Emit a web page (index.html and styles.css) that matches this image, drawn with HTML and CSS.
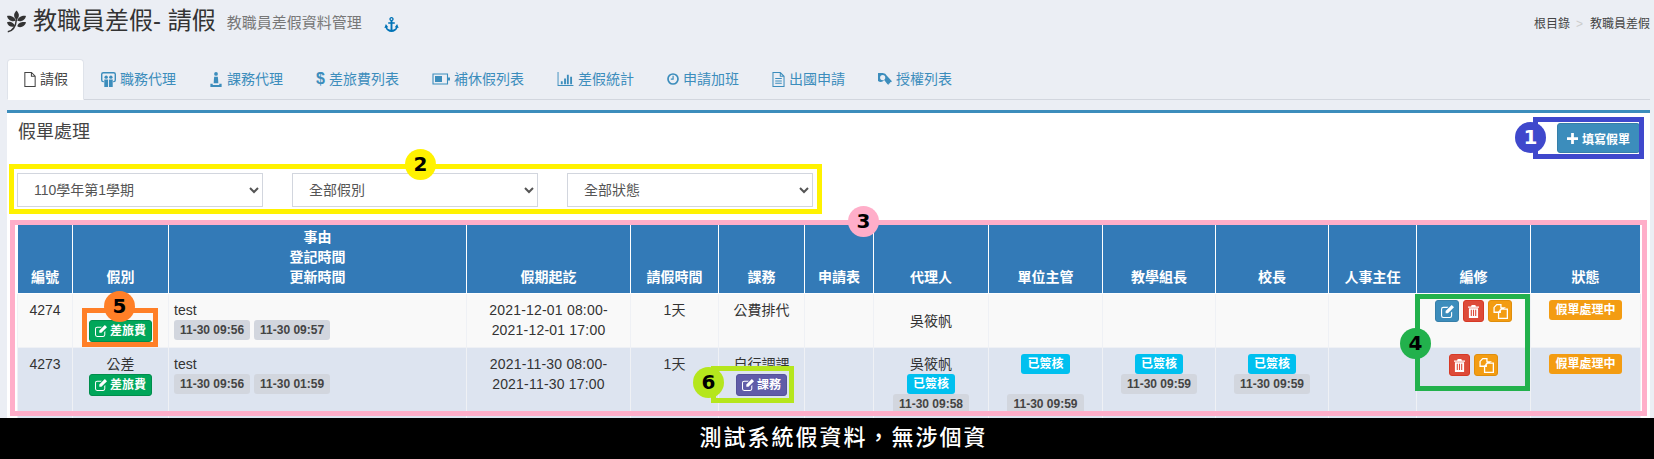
FILE: index.html
```html
<!DOCTYPE html>
<html lang="zh-Hant">
<head>
    <meta charset="UTF-8">
    <title>教職員差假- 請假</title>
    <link rel="stylesheet" href="styles.css">
</head>
<body>
    <svg class="icon-defs" aria-hidden="true">
        <symbol id="i-leaf" viewBox="0 0 24 28">
            <path d="M12 0C16 4 16 8 12 12C8 8 8 4 12 0Z"/>
            <path d="M13 13C14 8 20 6 24 7C23 12 18 15 13 13Z"/>
            <path d="M11 13C10 8 4 6 0 7C1 12 6 15 11 13Z"/>
            <path d="M10 20C9 15 3 13 0 15C1 20 6 22 10 20Z"/>
            <path d="M13 20C14 15 20 14 24 15C23 20 17 23 13 20Z"/>
            <path d="M1 27C7 26 11 21 12 11" fill="none" stroke="currentColor" stroke-width="1.800"/>
        </symbol>
        <symbol id="i-anchor" viewBox="0 0 16 16">
            <path d="M8 0a2.2 2.2 0 0 1 1 4.2V5.5h2.5v1.6H9v6.6c1.7-.3 3.2-1.2 3.8-2.6l-1.3-.3L14 7.5l1.6 4.2-1.2-.3C13.500 14 11 16 8 16s-5.500-2-6.400-4.600l-1.200.3L2 7.500l2.500 3.300-1.300.3c.6 1.400 2.100 2.300 3.800 2.600V7.100H4.500V5.500H7V4.200A2.200 2.200 0 0 1 8 0zm0 1.300a.9.9 0 1 0 0 1.800.9.9 0 0 0 0-1.800z"/>
        </symbol>
        <symbol id="i-file" viewBox="0 0 14 16">
            <path d="M1.500.5h7l4 4v11h-11zM8.500.5v4h4" fill="none" stroke="currentColor" stroke-width="1.100"/>
        </symbol>
        <symbol id="i-team" viewBox="0 0 16 16">
            <path d="M2.500 0h11A2.500 2.500 0 0 1 16 2.500v6A2.500 2.500 0 0 1 13.500 11H13V9.500h.5a1 1 0 0 0 1-1v-6a1 1 0 0 0-1-1h-11a1 1 0 0 0-1 1v6a1 1 0 0 0 1 1H3V11h-.5A2.500 2.500 0 0 1 0 8.500v-6A2.500 2.500 0 0 1 2.500 0z"/>
            <circle cx="5.500" cy="5.500" r="1.800"/>
            <circle cx="10.500" cy="5.500" r="1.800"/>
            <path d="M3.500 8h4v8h-4zM8.500 8h4v8h-4z"/>
        </symbol>
        <symbol id="i-person" viewBox="0 0 14 16">
            <circle cx="7" cy="2" r="2"/>
            <path d="M5 5h4l.5 7h-5z"/>
            <path d="M1 12.500h2.500v1.300h7v-1.300H13V16H1z"/>
        </symbol>
        <symbol id="i-battery" viewBox="0 0 18 12">
            <path d="M1 1h14.500v10H1z" fill="none" stroke="currentColor" stroke-width="1.100"/>
            <path d="M3 3h7v6H3zM16 4.500h2v3h-2z"/>
        </symbol>
        <symbol id="i-chart" viewBox="0 0 17 15">
            <path d="M0 0h1v14h16v1H0z"/>
            <path d="M3.500 10h2v3h-2zM7 7h2v6H7zM10 3h2v10h-2zM13.500 5h2v8h-2z"/>
        </symbol>
        <symbol id="i-clock" viewBox="0 0 12 12">
            <circle cx="6" cy="6" r="5" fill="none" stroke="currentColor" stroke-width="1.700"/>
            <path d="M5.500 2.800h1.200v3.900H3.800V5.600h1.700z"/>
        </symbol>
        <symbol id="i-doc" viewBox="0 0 13 16">
            <path d="M.6.600h7.800l4 4v10.800H.6zM8.400.600v4h4" fill="none" stroke="currentColor" stroke-width="1.100"/>
            <path d="M3 6.500h7v1H3zM3 9h7v1H3zM3 11.500h7v1H3z"/>
        </symbol>
        <symbol id="i-key" viewBox="0 0 15 13">
            <path fill-rule="evenodd" d="M5 0a5 5 0 0 1 4.500 3L15 9l-1 1-1-.2.100 1.400-1.400.1-.2 1.400-1.300-.5-3.600-4.500A5 5 0 1 1 5 0zM5 2.200a2.800 2.800 0 1 0 0 5.600 2.800 2.800 0 0 0 0-5.600z"/>
        </symbol>
        <symbol id="i-plus" viewBox="0 0 12 12">
            <path d="M4.500 0h3v4.500H12v3H7.500V12h-3V7.500H0v-3h4.500z"/>
        </symbol>
        <symbol id="i-edit" viewBox="0 0 14 14">
            <path d="M2.500 2H8L6.800 3.200H2.500a1.300 1.300 0 0 0-1.300 1.300v7c0 .7.600 1.300 1.300 1.300h7c.7 0 1.300-.6 1.300-1.300V8.200L12 7v4.500A2.500 2.500 0 0 1 9.500 14h-7A2.500 2.500 0 0 1 0 11.500v-7A2.500 2.500 0 0 1 2.500 2z"/>
            <path d="M11.500 0L14 2.500 7.500 9H5V6.500z"/>
        </symbol>
        <symbol id="i-trash" viewBox="0 0 12 14">
            <path d="M4 0h4l.6 1.500H12v1.300H0V1.500h3.400z"/>
            <path d="M1 3.500h10V14H1zM3 5v7h1.200V5zm2.400 0v7h1.200V5zM7.800 5v7H9V5z" fill-rule="evenodd"/>
        </symbol>
        <symbol id="i-copy" viewBox="0 0 14 14">
            <path d="M3.500.6h3.900v3H10L6.800 5.500v2.200H1V3.200zM8 4.800h5.400v8.600H5.200V7.500z" fill="none" stroke="currentColor" stroke-width="1.200"/>
        </symbol>
    </svg>

    <div class="page">
        <header class="page-header">
            <h1 class="page-title">
                <svg class="logo"><use href="#i-leaf"/></svg>
                教職員差假- 請假
                <small>教職員差假資料管理</small>
                <svg class="anchor"><use href="#i-anchor"/></svg>
            </h1>
            <div class="breadcrumb"><span>根目錄</span><span class="sep">&gt;</span><span>教職員差假</span></div>
        </header>

        <ul class="tabs">
            <li class="active"><a href="#"><svg width="14" height="15"><use href="#i-file"/></svg>請假</a></li>
            <li><a href="#"><svg width="15" height="15"><use href="#i-team"/></svg>職務代理</a></li>
            <li><a href="#"><svg width="14" height="15"><use href="#i-person"/></svg>課務代理</a></li>
            <li><a href="#"><b class="dollar">$</b>差旅費列表</a></li>
            <li><a href="#"><svg width="18" height="12"><use href="#i-battery"/></svg>補休假列表</a></li>
            <li><a href="#"><svg width="17" height="14"><use href="#i-chart"/></svg>差假統計</a></li>
            <li><a href="#"><svg width="12" height="12"><use href="#i-clock"/></svg>申請加班</a></li>
            <li><a href="#"><svg width="13" height="15"><use href="#i-doc"/></svg>出國申請</a></li>
            <li><a href="#"><svg width="14" height="12"><use href="#i-key"/></svg>授權列表</a></li>
        </ul>

        <section class="box">
            <div class="box-header">
                <h3 class="box-title">假單處理</h3>
                <button class="btn btn-add" type="button"><svg width="11" height="11"><use href="#i-plus"/></svg>填寫假單</button>
            </div>

            <div class="filters">
                <select><option>110學年第1學期</option></select>
                <select><option>全部假別</option></select>
                <select><option>全部狀態</option></select>
            </div>

            <table class="leave-table">
                <thead>
                    <tr>
                        <th class="c-id">編號</th>
                        <th class="c-type">假別</th>
                        <th class="c-reason">事由<br>登記時間<br>更新時間</th>
                        <th class="c-range">假期起訖</th>
                        <th class="c-time">請假時間</th>
                        <th class="c-course">課務</th>
                        <th class="c-form">申請表</th>
                        <th class="c-agent">代理人</th>
                        <th class="c-sign">單位主管</th>
                        <th class="c-sign2">教學組長</th>
                        <th class="c-sign2">校長</th>
                        <th class="c-hr">人事主任</th>
                        <th class="c-edit">編修</th>
                        <th class="c-status">狀態</th>
                    </tr>
                </thead>
                <tbody>
                    <tr>
                        <td>4274</td>
                        <td><br><a class="btn btn-green" href="#"><svg width="12" height="12"><use href="#i-edit"/></svg>差旅費</a></td>
                        <td class="left">test<br><span class="time">11-30 09:56</span><span class="time">11-30 09:57</span></td>
                        <td class="dates">2021-12-01 08:00-<br>2021-12-01 17:00</td>
                        <td>1天</td>
                        <td>公費排代</td>
                        <td></td>
                        <td class="middle">吳筱帆</td>
                        <td></td>
                        <td></td>
                        <td></td>
                        <td></td>
                        <td>
                            <div class="actions">
                                <a class="btn btn-blue" href="#"><svg width="13" height="13"><use href="#i-edit"/></svg></a>
                                <a class="btn btn-red" href="#"><svg width="11" height="13"><use href="#i-trash"/></svg></a>
                                <a class="btn btn-orange" href="#"><svg width="15" height="15"><use href="#i-copy"/></svg></a>
                            </div>
                        </td>
                        <td><span class="tag tag-orange">假單處理中</span></td>
                    </tr>
                    <tr>
                        <td>4273</td>
                        <td>公差<br><a class="btn btn-green" href="#"><svg width="12" height="12"><use href="#i-edit"/></svg>差旅費</a></td>
                        <td class="left">test<br><span class="time">11-30 09:56</span><span class="time">11-30 01:59</span></td>
                        <td class="dates">2021-11-30 08:00-<br>2021-11-30 17:00</td>
                        <td>1天</td>
                        <td>自行調課<br><a class="btn btn-purple" href="#"><svg width="12" height="12"><use href="#i-edit"/></svg>課務</a></td>
                        <td></td>
                        <td>吳筱帆<br><span class="tag tag-cyan">已簽核</span><br><span class="time">11-30 09:58</span></td>
                        <td><span class="tag tag-cyan">已簽核</span><br><br><span class="time">11-30 09:59</span></td>
                        <td><span class="tag tag-cyan">已簽核</span><br><span class="time">11-30 09:59</span></td>
                        <td><span class="tag tag-cyan">已簽核</span><br><span class="time">11-30 09:59</span></td>
                        <td></td>
                        <td>
                            <div class="actions">
                                <a class="btn btn-red" href="#"><svg width="11" height="13"><use href="#i-trash"/></svg></a>
                                <a class="btn btn-orange" href="#"><svg width="15" height="15"><use href="#i-copy"/></svg></a>
                            </div>
                        </td>
                        <td><span class="tag tag-orange">假單處理中</span></td>
                    </tr>
                </tbody>
            </table>
        </section>

        <!-- numbered callouts drawn over the screenshot -->
        <div class="frame frame-1"></div>
        <div class="frame frame-2"></div>
        <div class="frame frame-3"></div>
        <div class="frame frame-4"></div>
        <div class="frame frame-5"></div>
        <div class="frame frame-6"></div>
        <div class="dot dot-1">1</div>
        <div class="dot dot-2">2</div>
        <div class="dot dot-3">3</div>
        <div class="dot dot-4">4</div>
        <div class="dot dot-5">5</div>
        <div class="dot dot-6">6</div>
    </div>

    <footer class="notice">測試系統假資料&#xFF0C;無涉個資</footer>
</body>
</html>
```

FILE: styles.css
```css
* {
    box-sizing: border-box;
}

html, body {
    height: 100%;
}

body {
    margin: 0;
    display: flex;
    flex-direction: column;
    overflow: hidden;
    background-color: #ebeef4;
    color: #333;
    font-family: "Liberation Sans", "Noto Sans CJK TC", sans-serif;
    font-size: 14px;
    line-height: 20px;
}

a {
    text-decoration: none;
}

svg {
    fill: currentColor;
    flex: none;
}

.icon-defs {
    display: none;
}

.page {
    position: relative;
    flex: 1;
    min-height: 0;
    overflow: hidden;
    padding: 0 4px 0 7px;
}

/* header */
.page-header {
    display: flex;
    justify-content: space-between;
    height: 59px;
    padding-top: 8px;
}

.page-title {
    margin: 0;
    display: flex;
    align-items: center;
    height: 26px;
    font-size: 24px;
    font-weight: 400;
    color: #333;
}

.page-title small {
    margin: 3px 0 0 11px;
    font-size: 15px;
    color: #777;
}

.logo {
    width: 19px;
    height: 23px;
    margin: 1px 7px 0 0;
}

.anchor {
    width: 15px;
    height: 15px;
    margin: 7px 0 0 22px;
    color: #0073b7;
}

.breadcrumb {
    padding-top: 6px;
    font-size: 12px;
    color: #444;
    white-space: nowrap;
}

.breadcrumb .sep {
    margin: 0 7px 0 6px;
    color: #ccc;
}

/* tabs */
.tabs {
    display: flex;
    margin: 0;
    padding: 0;
    list-style: none;
    border-bottom: 1px solid #d2d6de;
}

.tabs li {
    margin: 0 1px -1px 0;
}

.tabs a {
    display: flex;
    align-items: center;
    gap: 4px;
    height: 41px;
    padding: 0 15px 1px;
    border: 1px solid transparent;
    border-radius: 4px 4px 0 0;
    color: #3c8dbc;
}

.tabs .active a {
    gap: 3px;
    background-color: #fff;
    border-color: #dfe3ea #dfe3ea #fff;
    color: #444;
}

.dollar {
    font-size: 16px;
}

/* box */
.box {
    height: 400px;
    margin-top: 10px;
    background-color: #fff;
    border-top: 3px solid #3c8dbc;
}

.box-header {
    display: flex;
    justify-content: space-between;
    padding: 10px 10px 0 11px;
}

.box-title {
    margin: 0;
    font-size: 18px;
    font-weight: 400;
    line-height: 18px;
    color: #444;
}

.btn {
    display: inline-flex;
    align-items: center;
    justify-content: center;
    gap: 3px;
    height: 22px;
    padding: 0 5px;
    border: 1px solid transparent;
    border-radius: 3px;
    color: #fff;
    font-size: 12px;
    font-weight: 700;
    vertical-align: top;
}

.btn-add {
    width: 83px;
    height: 30px;
    gap: 4px;
    background-color: #3c8dbc;
    border-color: #367fa9;
    font-family: inherit;
}

.btn-green { background-color: #00a65a; border-color: #008d4c; }
.btn-purple { background-color: #605ca8; border-color: #555299; }
.btn-blue { width: 24px; background-color: #3c8dbc; border-color: #367fa9; }
.btn-red { width: 21px; background-color: #dd4b39; border-color: #d73925; }
.btn-orange { width: 24px; background-color: #f39c12; border-color: #e08e0b; }

/* filters */
.filters {
    display: flex;
    gap: 29px;
    margin-top: 20px;
    padding-left: 10px;
}

.filters select {
    width: 246px;
    height: 34px;
    padding: 6px 12px;
    background-color: #fff;
    border: 1px solid #d2d6de;
    border-radius: 0;
    color: #555;
    font-family: inherit;
    font-size: 14px;
}

/* table */
.leave-table {
    width: 1623px;
    margin: 13px 0 0 10px;
    border-collapse: collapse;
    table-layout: fixed;
}

.leave-table th {
    padding: 7px 4px 6px;
    border: 1px solid #fff;
    border-top: 0;
    background-color: #337ab7;
    color: #fff;
    font-weight: 700;
    text-align: center;
    vertical-align: bottom;
}

.leave-table td {
    padding: 6px 5px 5px;
    border: 1px solid #eff1f5;
    text-align: center;
    vertical-align: top;
}

.leave-table tbody tr:nth-child(odd) {
    background-color: #f9f9f9;
}

.leave-table tbody tr:nth-child(even) {
    background-color: #dde4f0;
}

.leave-table .left {
    text-align: left;
}

.leave-table .middle {
    vertical-align: middle;
}

.leave-table .dates {
    letter-spacing: .2px;
}

.c-id { width: 55px; }
.c-type { width: 96px; }
.c-reason { width: 298px; }
.c-range { width: 164px; }
.c-time { width: 88px; }
.c-course { width: 86px; }
.c-form { width: 69px; }
.c-agent { width: 115px; }
.c-sign { width: 114px; }
.c-sign2 { width: 113px; }
.c-hr { width: 88px; }
.c-edit { width: 114px; }
.c-status { width: 110px; }

.time {
    display: inline-block;
    height: 20px;
    padding: 0 6px;
    margin-right: 4px;
    background-color: #d2d6de;
    border-radius: 3px;
    color: #444;
    font-size: 12px;
    font-weight: 700;
    vertical-align: top;
}

td:not(.left) > .time {
    margin-right: 0;
}

.tag {
    display: inline-block;
    height: 20px;
    padding: 0 6px;
    border-radius: 3px;
    color: #fff;
    font-size: 12px;
    font-weight: 700;
    vertical-align: top;
}

.tag-cyan { background-color: #00c0ef; }
.tag-orange { background-color: #f39c12; }

.actions {
    display: flex;
    justify-content: center;
    gap: 4px;
}

/* callouts */
.frame {
    position: absolute;
    border: 5px solid;
}

.frame-1 { left: 1533px; top: 117px; width: 111px; height: 42px; border-color: #3f48cc; }
.frame-2 { left: 9px; top: 164px; width: 813px; height: 50px; border-color: #fff200; }
.frame-3 { left: 10px; top: 220px; width: 1637px; height: 196px; border-color: #ffaec9; }
.frame-4 { left: 1415px; top: 294px; width: 115px; height: 97px; border-color: #22b14c; }
.frame-5 { left: 82px; top: 308px; width: 76px; height: 39px; border-color: #ff7f27; }
.frame-6 { left: 711px; top: 366px; width: 83px; height: 37px; border-color: #b5e61d; }

.dot {
    position: absolute;
    width: 31px;
    height: 31px;
    border-radius: 50%;
    color: #000;
    font-family: "DejaVu Sans", sans-serif;
    font-size: 20px;
    font-weight: 700;
    line-height: 31px;
    text-align: center;
}

.dot-1 { left: 1515px; top: 122px; background-color: #3f48cc; color: #fff; }
.dot-2 { left: 405px; top: 149px; background-color: #fff200; }
.dot-3 { left: 848px; top: 206px; background-color: #ffaec9; }
.dot-4 { left: 1400px; top: 328px; background-color: #22b14c; }
.dot-5 { left: 104px; top: 291px; background-color: #ff7f27; }
.dot-6 { left: 693px; top: 367px; background-color: #b5e61d; }

/* caption bar */
.notice {
    flex: none;
    height: 41px;
    padding-left: 33px;
    background-color: #000;
    color: #fff;
    font-size: 22px;
    font-weight: 500;
    letter-spacing: 2px;
    line-height: 39px;
    text-align: center;
}
```
